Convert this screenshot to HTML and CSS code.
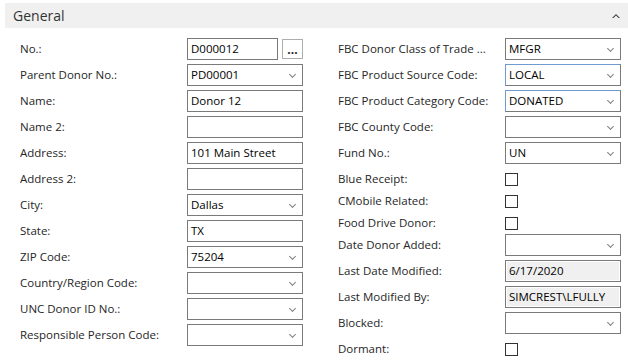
FILE: index.html
```html
<!DOCTYPE html>
<html>
<head>
<meta charset="utf-8">
<link rel="stylesheet" href="styles.css">
</head>
<body>
<div class="section">
  <div class="header">
    <span class="title">General</span>
    <svg class="collapse" width="8" height="6" viewBox="0 0 8 6"><path d="M0 5 L4 1 L8 5 L6.5 5 L4 2.6 L1.5 5 Z" fill="#444"/></svg>
  </div>
  <div class="form">
    <div class="col">
      <div class="row"><span class="label">No.:</span><span class="field short">D000012</span><span class="assist">...</span></div>
      <div class="row"><span class="label">Parent Donor No.:</span><span class="field select">PD00001<i class="chev"></i></span></div>
      <div class="row"><span class="label">Name:</span><span class="field">Donor 12</span></div>
      <div class="row"><span class="label">Name 2:</span><span class="field"></span></div>
      <div class="row"><span class="label">Address:</span><span class="field">101 Main Street</span></div>
      <div class="row"><span class="label">Address 2:</span><span class="field"></span></div>
      <div class="row"><span class="label">City:</span><span class="field select">Dallas<i class="chev"></i></span></div>
      <div class="row"><span class="label">State:</span><span class="field">TX</span></div>
      <div class="row"><span class="label">ZIP Code:</span><span class="field select">75204<i class="chev"></i></span></div>
      <div class="row"><span class="label">Country/Region Code:</span><span class="field select"><i class="chev"></i></span></div>
      <div class="row"><span class="label">UNC Donor ID No.:</span><span class="field select"><i class="chev"></i></span></div>
      <div class="row"><span class="label">Responsible Person Code:</span><span class="field select"><i class="chev"></i></span></div>
    </div>
    <div class="col">
      <div class="row"><span class="label">FBC Donor Class of Trade ...</span><span class="field select">MFGR<i class="chev"></i></span></div>
      <div class="row"><span class="label">FBC Product Source Code:</span><span class="field select hover">LOCAL<i class="chev"></i></span></div>
      <div class="row"><span class="label">FBC Product Category Code:</span><span class="field select hover">DONATED<i class="chev"></i></span></div>
      <div class="row"><span class="label">FBC County Code:</span><span class="field select"><i class="chev"></i></span></div>
      <div class="row"><span class="label">Fund No.:</span><span class="field select">UN<i class="chev"></i></span></div>
      <div class="row check"><span class="label">Blue Receipt:</span><span class="box"></span></div>
      <div class="row check"><span class="label">CMobile Related:</span><span class="box"></span></div>
      <div class="row check"><span class="label">Food Drive Donor:</span><span class="box"></span></div>
      <div class="row"><span class="label">Date Donor Added:</span><span class="field select"><i class="chev"></i></span></div>
      <div class="row"><span class="label">Last Date Modified:</span><span class="field readonly">6/17/2020</span></div>
      <div class="row"><span class="label">Last Modified By:</span><span class="field readonly">SIMCREST\LFULLY</span></div>
      <div class="row"><span class="label">Blocked:</span><span class="field select"><i class="chev"></i></span></div>
      <div class="row check"><span class="label">Dormant:</span><span class="box"></span></div>
    </div>
  </div>
</div>
</body>
</html>
```
FILE: styles.css
```css
html, body {
  margin: 0;
  padding: 0;
  background: #fff;
}
body {
  font-family: "Open Sans", "Noto Sans", sans-serif;
  font-size: 11.5px;
  color: #262626;
}
.section {
  padding: 3px 0 0 5px;
}
.header {
  height: 25px;
  background: #f0f0f0;
  display: flex;
  align-items: center;
  justify-content: space-between;
  padding: 0 8px 0 8px;
}
.title {
  font-size: 14px;
  color: #333;
}
.form {
  display: flex;
  gap: 35px;
  padding: 10px 0 0 15px;
}
.col {
  display: flex;
  flex-direction: column;
}
.row {
  display: flex;
  height: 26px;
  align-items: flex-start;
}
.row.check {
  height: 22px;
}
.label {
  width: 167px;
  height: 22px;
  line-height: 21px;
  white-space: nowrap;
  overflow: hidden;
}
.field {
  position: relative;
  box-sizing: border-box;
  width: 116px;
  height: 22px;
  border: 1px solid #7a7a7a;
  padding: 0 3px;
  line-height: 19px;
  color: #000;
  white-space: nowrap;
  overflow: hidden;
}
.field.short {
  width: 91px;
}
.field.hover {
  border-color: #6f9bd0 #7a7a7a #7a7a7a #6f9bd0;
}
.field.readonly {
  background: #f0f0f0;
  box-shadow: inset 0 0 0 1px #fff;
}
.assist {
  box-sizing: border-box;
  width: 21px;
  height: 20px;
  margin: 1px 0 0 4px;
  border: 1px solid #adadad;
  background: #fff;
  font-weight: bold;
  font-size: 12px;
  line-height: 20px;
  text-align: center;
  color: #222;
}
.chev {
  position: absolute;
  right: 7px;
  top: 7px;
  width: 4px;
  height: 4px;
  border-right: 1.5px solid #808080;
  border-bottom: 1.5px solid #808080;
  transform: rotate(45deg);
}
.box {
  box-sizing: border-box;
  width: 13px;
  height: 13px;
  border: 1px solid #333;
  background: #fff;
  align-self: center;
}
```
